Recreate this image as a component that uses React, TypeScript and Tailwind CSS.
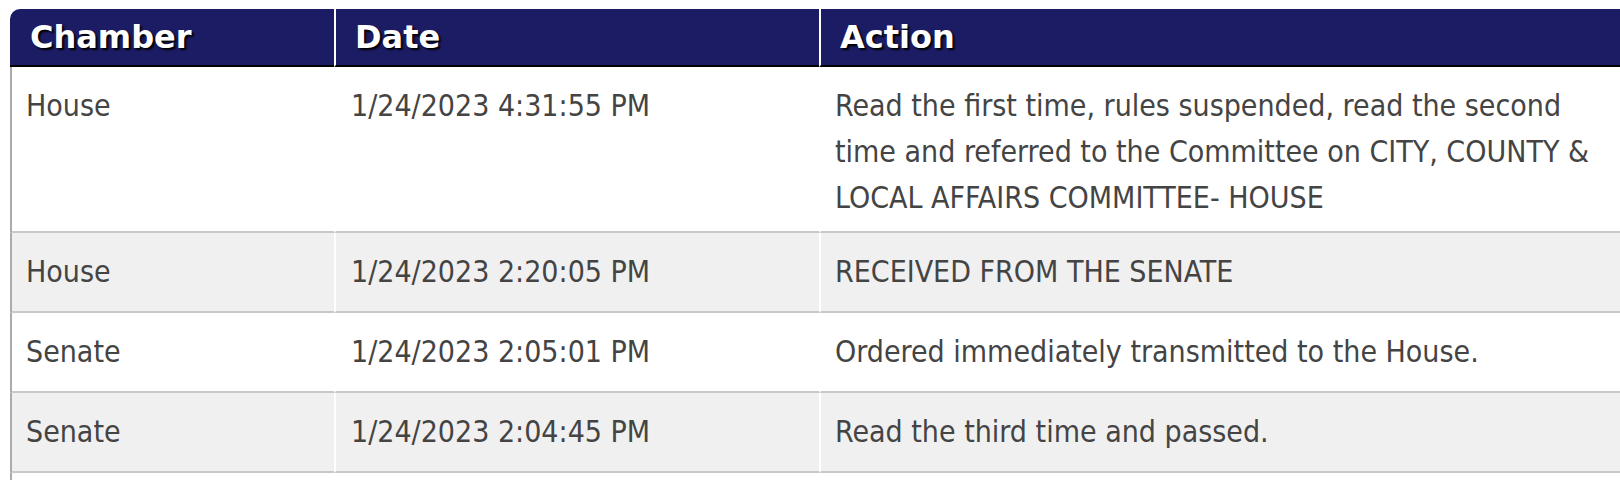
import React from 'react';

type HistoryRow = {
  chamber: string;
  date: string;
  action: string;
};

const rows: HistoryRow[] = [
  {
    chamber: 'House',
    date: '1/24/2023 4:31:55 PM',
    action:
      'Read the first time, rules suspended, read the second time and referred to the Committee on CITY, COUNTY & LOCAL AFFAIRS COMMITTEE- HOUSE',
  },
  { chamber: 'House', date: '1/24/2023 2:20:05 PM', action: 'RECEIVED FROM THE SENATE' },
  { chamber: 'Senate', date: '1/24/2023 2:05:01 PM', action: 'Ordered immediately transmitted to the House.' },
  { chamber: 'Senate', date: '1/24/2023 2:04:45 PM', action: 'Read the third time and passed.' },
  { chamber: '', date: '', action: '' },
];

function HeaderCell({ label, first }: { label: string; first?: boolean }) {
  return (
    <th
      className={`h-[58px] border-b-2 border-b-black p-0 text-left align-middle font-['DejaVu_Sans',sans-serif] font-stretch-normal text-[32px] font-bold leading-[40px] text-white [text-shadow:2px_2px_2px_#000] ${
        first ? 'rounded-tl-[10px] pl-[20px]' : 'border-l-2 border-l-white pl-[19px]'
      }`}
    >
      {label}
    </th>
  );
}

function App() {
  return (
    <div className="h-[480px] w-[1620px] overflow-hidden bg-white pl-[10px] pt-[9px]">
      <table className="w-[1610px] table-fixed border-separate border-spacing-0 font-['DejaVu_Sans_Condensed','DejaVu_Sans',sans-serif] font-stretch-condensed text-[30px] leading-[46px] text-[#444444]">
        <colgroup>
          <col className="w-[324px]" />
          <col className="w-[485px]" />
          <col />
        </colgroup>
        <thead className="bg-[#1c1c64]">
          <tr>
            <HeaderCell label="Chamber" first />
            <HeaderCell label="Date" />
            <HeaderCell label="Action" />
          </tr>
        </thead>
        <tbody>
          {rows.map((row, i) => (
            <tr key={i} className={i % 2 === 1 ? 'bg-[#f0f0f0]' : 'bg-white'}>
              <td className="h-[80px] border-b-2 border-l-2 border-b-[#c8c8c8] border-l-[#ababab] pb-[10px] pl-[14px] pt-[16px] align-top">
                {row.chamber}
              </td>
              <td className="h-[80px] border-b-2 border-l-2 border-b-[#c8c8c8] border-l-white pb-[10px] pl-[15px] pt-[16px] align-top">
                {row.date}
              </td>
              <td className="h-[80px] border-b-2 border-l-2 border-b-[#c8c8c8] border-l-white pb-[10px] pl-[14px] pr-[22px] pt-[16px] align-top">
                {row.action}
              </td>
            </tr>
          ))}
        </tbody>
      </table>
    </div>
  );
}

export default App;
